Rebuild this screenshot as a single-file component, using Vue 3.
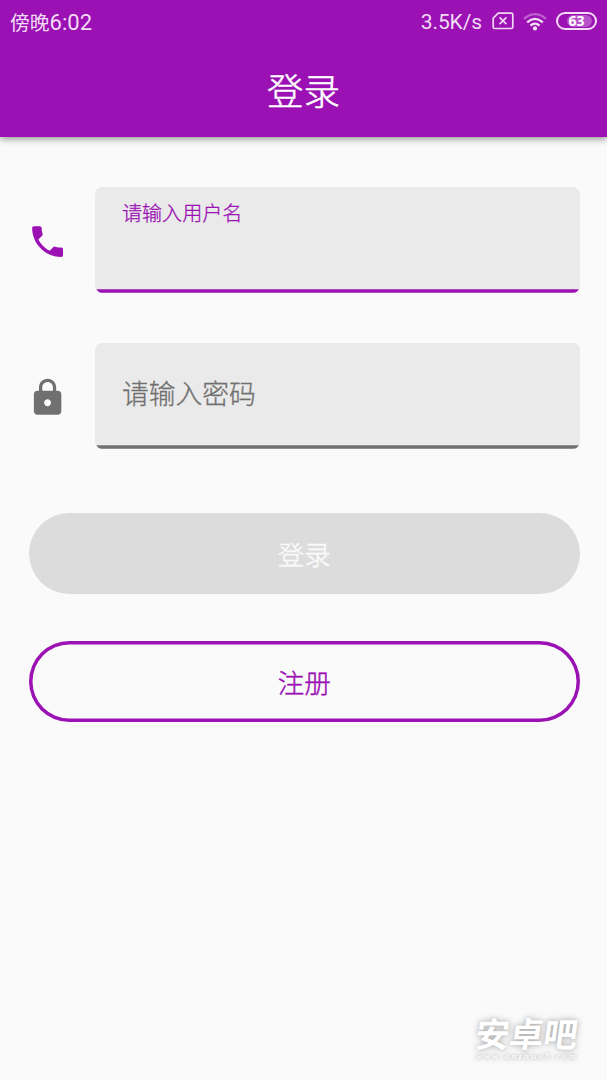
<script setup>
const fields = [
  { id: 'user', label: '请输入用户名', active: true, icon: 'M6.62 10.79c1.44 2.83 3.76 5.14 6.59 6.59l2.2-2.2c.27-.27.67-.36 1.02-.24 1.12.37 2.33.57 3.57.57.55 0 1 .45 1 1V20c0 .55-.45 1-1 1-9.39 0-17-7.61-17-17 0-.55.45-1 1-1h3.5c.55 0 1 .45 1 1 0 1.25.2 2.45.57 3.57.11.35.03.74-.25 1.02l-2.2 2.2z' },
  { id: 'pass', label: '请输入密码', active: false, icon: 'M18 8h-1V6c0-2.76-2.24-5-5-5S7 3.24 7 6v2H6c-1.1 0-2 .9-2 2v10c0 1.1.9 2 2 2h12c1.1 0 2-.9 2-2V10c0-1.1-.9-2-2-2zm-6 9c-1.1 0-2-.9-2-2s.9-2 2-2 2 .9 2 2-.9 2-2 2zm3.1-9H8.9V6c0-1.71 1.39-3.1 3.1-3.1s3.1 1.39 3.1 3.1v2z' },
]
</script>

<template>
  <div class="screen">
    <header class="top">
      <div class="status">
        <span class="time">傍晚<span class="digits">6:02</span></span>
        <span class="speed">3.5K/s</span>
        <svg class="sim" width="22" height="18" viewBox="0 0 22 18" fill="none" stroke="#f0d5f5" stroke-width="1.7">
          <path d="M6.2 1.2H19.3Q20.8 1.2 20.8 2.7V15Q20.8 16.5 19.3 16.5H2.7Q1.2 16.5 1.2 15V6.2Z" />
          <path d="M7.6 5.4l6.8 6.8M14.4 5.4l-6.8 6.8" />
        </svg>
        <svg class="wifi" width="24" height="18" viewBox="0 0 24 18" fill="none" stroke="#f5e3f8" stroke-width="2.2">
          <path d="M1 5.8Q12 -3.4 23 5.8" stroke="#bd62cc" />
          <path d="M4.2 9.3Q12 2.6 19.8 9.3" />
          <path d="M7.4 12.6Q12 8.6 16.6 12.6" />
          <circle cx="12" cy="15.4" r="2.1" fill="#f5e3f8" stroke="none" />
        </svg>
        <span class="battery"><span class="charge"></span><b>63</b></span>
      </div>
      <h1>登录</h1>
    </header>

    <main>
      <div v-for="f in fields" :key="f.id" class="row" :class="{ active: f.active }">
        <svg class="icon" viewBox="0 0 24 24"><path :d="f.icon" fill="currentColor" /></svg>
        <div class="field">
          <span class="label">{{ f.label }}</span>
          <span class="line"></span>
        </div>
      </div>
      <button class="login" disabled>登录</button>
      <button class="register">注册</button>
    </main>

    <div class="mark">
      <div class="name">安卓吧</div>
      <div class="url">www.anzhuo8.com</div>
    </div>
  </div>
</template>

<style>
body { background: #fafafa; }
</style>

<style scoped>
.screen {
  position: relative;
  width: 607px;
  height: 1080px;
  overflow: hidden;
  background: #fafafa;
  font-family: Roboto, "Noto Sans CJK SC", sans-serif;
}
.top {
  height: 136.5px;
  background: #9b11b4;
  box-shadow: 0 2px 7px rgba(0, 0, 0, .42);
}
.status {
  box-sizing: border-box;
  display: flex;
  align-items: center;
  height: 43px;
  padding: 0 10px;
  color: #f2dcf6;
  font-size: 21.5px;
}
.time { font-size: 19.8px; }
.digits { font-size: 22px; }
.speed { margin-left: auto; font-size: 21px; letter-spacing: -.1px; }
.sim { margin: -1px 9px 0 10px; }
.wifi { margin-right: 9px; }
.battery {
  position: relative;
  box-sizing: border-box;
  width: 41px;
  height: 18px;
  margin-top: -2px;
  border: 2px solid #f2dcf6;
  border-radius: 9px;
  text-align: center;
}
.charge {
  position: absolute;
  inset: 1px 3px 1px 9px;
  border-radius: 6px;
  background: #b852c9;
}
.battery b { position: relative; display: block; font: 700 14px/14px "Open Sans", sans-serif; color: #fff; }
h1 {
  margin: 0;
  padding-top: 23px;
  text-align: center;
  color: #fff;
  font-size: 36.5px;
  line-height: 54px;
  font-weight: 300;
  -webkit-text-stroke: .5px currentColor;
}
main { padding: 50.5px 27px 0 28.7px; }
.row {
  display: flex;
  align-items: center;
  height: 105.7px;
  margin-bottom: 50.3px;
  color: #707070;
}
.row.active { color: #9b11b4; }
.icon { width: 41.2px; height: 41.2px; margin: 3.4px 27.2px 0 -1.7px; flex: none; }
.field {
  display: flex;
  flex-direction: column;
  justify-content: space-between;
  flex: 1;
  height: 100%;
  border-radius: 7px;
  background: #eaeaea;
  overflow: hidden;
}
.label {
  padding: 32px 0 0 26.5px;
  font-size: 26.8px;
  line-height: 40px;
  font-weight: 300;
  -webkit-text-stroke: .3px currentColor;
}
.active .label { padding-top: 12px; font-size: 20.1px; line-height: 30px; }
.line {
  height: 3.5px;
  margin: 0 1px;
  background: currentColor;
  clip-path: polygon(0 0, 100% 0, calc(100% - 3px) 100%, 3px 100%);
}
button {
  display: block;
  box-sizing: border-box;
  width: 100%;
  height: 81px;
  padding: 0;
  border: 0;
  border-radius: 41px;
  font-family: inherit;
  font-size: 26.5px;
  font-weight: 300;
  -webkit-text-stroke: .45px currentColor;
}
.login { margin-top: 64px; background: #dcdcdc; color: #fafafa; }
.register { margin-top: 47.5px; box-shadow: inset 0 0 0 3.5px #9b11b4; background: transparent; color: #9b11b4; }
.mark {
  position: absolute;
  left: 476px;
  top: 1013px;
  width: 110px;
  color: #fff;
  white-space: nowrap;
  text-shadow: 0 0 5px rgba(0, 0, 0, .24), 0 0 10px rgba(0, 0, 0, .17);
}
.name { font: 700 34px/39px "Noto Sans CJK SC", sans-serif; transform: skewX(-8deg); }
.url {
  font: italic 700 9px/9px "Liberation Serif", serif;
  letter-spacing: 2.15px;
  text-shadow: 0 0 3px rgba(0, 0, 0, .35), 0 0 8px rgba(0, 0, 0, .25);
}
</style>
